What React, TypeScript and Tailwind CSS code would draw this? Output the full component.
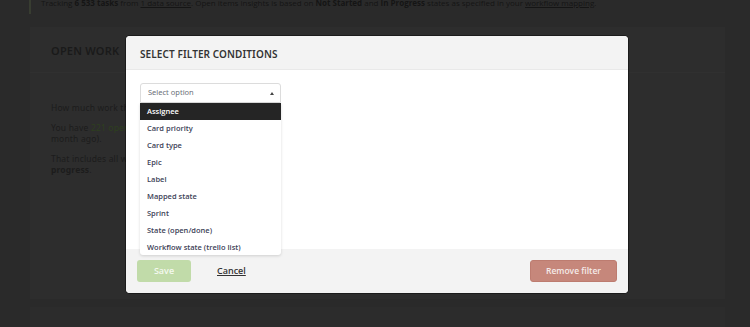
import React from "react";

const options = [
  "Card priority",
  "Card type",
  "Epic",
  "Label",
  "Mapped state",
  "Sprint",
  "State (open/done)",
  "Workflow state (trello list)",
];

export default function App() {
  return (
    <div
      className="relative w-[750px] h-[327px] overflow-hidden bg-[#2a2a2a]"
      style={{ fontFamily: "'Open Sans', 'Liberation Sans', sans-serif" }}
    >
      {/* underlying page */}
      <div className="pl-[29px]">
        <div className="border-l-2 border-[#383d31] pl-[10px] h-[17px]">
          <p className="-mt-[3px] text-[8px] leading-[12px] text-[#151515] whitespace-nowrap">
            Tracking <b>6 533 tasks</b> from <u>1 data source</u>. Open items insights is based on{" "}
            <b>Not Started</b> and <b>In Progress</b> states as specified in your{" "}
            <u>workflow mapping</u>.
          </p>
        </div>
      </div>
      <div className="ml-[30px] mt-[13px] w-[695px] h-[272px] bg-[#2d2d2d]">
        <div className="h-[46px] border-b border-[#303030] pl-[21px] pt-[10px]">
          <span
            className="text-[11px] font-semibold tracking-[0.02em] text-[#1a1a1a]"
            style={{ fontFamily: "'Noto Sans', sans-serif" }}
          >
            OPEN WORK
          </span>
        </div>
        <div
          className="pl-[21px] pt-[29px] text-[8.5px] leading-[11px] text-[#1c1c1c] whitespace-nowrap tracking-[0.02em]"
          style={{ fontFamily: "'Noto Sans', sans-serif" }}
        >
          <p>How much work there is right now</p>
          <p className="mt-[9px]">
            You have <span className="text-[#2d3f1f]">221 open tasks</span> right now
          </p>
          <p>month ago).</p>
          <p className="mt-[9px]">That includes all work items</p>
          <p>
            <b>progress</b>.
          </p>
        </div>
      </div>
      <div className="ml-[30px] mt-[8px] w-[695px] h-[40px] bg-[#2c2c2c]" />

      {/* modal */}
      <div className="absolute left-[126px] top-[36px] w-[502px] h-[257px] rounded-[4px] bg-white overflow-visible shadow-[0_0_0_1px_rgba(0,0,0,0.4)]">
        <div className="h-[34px] rounded-t-[4px] bg-[#f3f3f3] border-b border-[#e9e9e9] flex items-center pl-[14px] pt-[3px]">
          <span
            className="text-[10px] font-semibold text-[#333] tracking-[0.01em]"
            style={{ fontFamily: "'Noto Sans', sans-serif" }}
          >
            SELECT FILTER CONDITIONS
          </span>
        </div>
        <div className="h-[179px] pl-[14px] pt-[13px]">
          <div className="relative w-[141px] z-10">
            <div className="h-[20px] rounded-t-[3px] border border-[#dcdcdc] flex items-center justify-between pl-[7px] pr-[6px]">
              <span
                className="text-[7.5px] text-[#6b6f78]"
                style={{ fontFamily: "'Noto Sans', sans-serif" }}
              >
                Select option
              </span>
              <span className="w-0 h-0 border-l-[2px] border-r-[2px] border-b-[3px] border-l-transparent border-r-transparent border-b-[#444]" />
            </div>
            <div
              className="bg-white rounded-b-[3px] shadow-[0_1px_3px_rgba(0,0,0,0.15)] text-[7.5px] font-semibold text-[#3d4257]"
              style={{ fontFamily: "'Open Sans', sans-serif" }}
            >
              <div className="h-[17px] bg-[#252525] text-white flex items-center pl-[7px]">
                Assignee
              </div>
              {options.map((o) => (
                <div key={o} className="h-[16.9px] flex items-center pl-[7px] pt-[1px]">
                  {o}
                </div>
              ))}
            </div>
          </div>
        </div>
        <div className="h-[44px] rounded-b-[4px] bg-[#f3f3f3] flex items-center pl-[11px] pr-[11px]">
          <div className="w-[54px] h-[22px] rounded-[3px] bg-[#c1dba9] flex items-center justify-center text-[9px] font-semibold text-[#f4f9ef]">
            Save
          </div>
          <span className="ml-[26px] text-[9px] font-semibold text-[#333] underline">
            Cancel
          </span>
          <div className="ml-auto w-[87px] h-[22px] rounded-[3px] bg-[#c6877b] border border-[#bd7c70] flex items-center justify-center text-[8.5px] font-semibold text-[#f5ebe9]">
            Remove filter
          </div>
        </div>
      </div>
    </div>
  );
}
